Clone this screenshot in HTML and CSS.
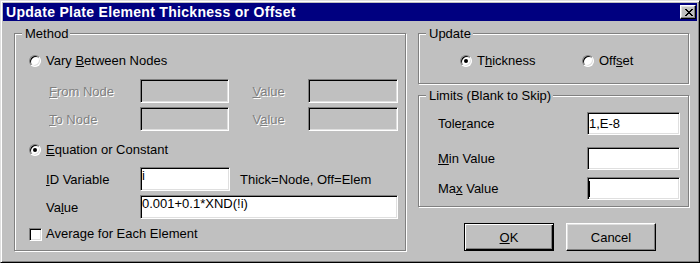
FILE: index.html
```html
<!DOCTYPE html>
<html lang="en">
<head>
    <meta charset="UTF-8">
    <title>Update Plate Element Thickness or Offset</title>
    <link rel="stylesheet" href="styles.css">
</head>
<body>
    <div class="window">
        <div class="titlebar">
            <span class="title">Update Plate Element Thickness or Offset</span>
            <div class="close">
                <svg width="8" height="7" viewBox="0 0 8 7" shape-rendering="crispEdges">
                    <path fill="#000" d="M0 0h2v1H0z M6 0h2v1H6z M1 1h2v1H1z M5 1h2v1H5z M2 2h4v1H2z M3 3h2v1H3z M2 4h4v1H2z M1 5h2v1H1z M5 5h2v1H5z M0 6h2v1H0z M6 6h2v1H6z"/>
                </svg>
            </div>
        </div>

        <div class="main">
            <div class="group method">
                <span class="legend">Method</span>
                <div class="method-body">
                    <div class="opt">
                        <span class="radio"></span>
                        <span>Vary <u>B</u>etween Nodes</span>
                    </div>
                    <div class="row row-from">
                        <span class="lbl dis"><u>F</u>rom Node</span>
                        <div class="field off"></div>
                        <span class="lbl2 dis"><u>V</u>alue</span>
                        <div class="field off"></div>
                    </div>
                    <div class="row row-to">
                        <span class="lbl dis"><u>T</u>o Node</span>
                        <div class="field off"></div>
                        <span class="lbl2 dis">V<u>a</u>lue</span>
                        <div class="field off"></div>
                    </div>
                    <div class="opt opt-eq">
                        <span class="radio on"></span>
                        <span><u>E</u>quation or Constant</span>
                    </div>
                    <div class="row row-id">
                        <span class="lbl"><u>I</u>D Variable</span>
                        <div class="field">i</div>
                        <span class="note">Thick=Node, Off=Elem</span>
                    </div>
                    <div class="row row-val">
                        <span class="lbl">Va<u>l</u>ue</span>
                        <div class="field wide">0.001+0.1*XND(!i)</div>
                    </div>
                    <div class="opt opt-check">
                        <span class="check"></span>
                        <span>Avera<u>g</u>e for Each Element</span>
                    </div>
                </div>
            </div>

            <div class="side">
                <div class="group update">
                    <span class="legend">Update</span>
                    <div class="update-body">
                        <div class="opt first">
                            <span class="radio on"></span>
                            <span>T<u>h</u>ickness</span>
                        </div>
                        <div class="opt">
                            <span class="radio"></span>
                            <span>Off<u>s</u>et</span>
                        </div>
                    </div>
                </div>

                <div class="group limits">
                    <span class="legend">Limits (Blank to Skip)</span>
                    <div class="limits-body">
                        <div class="lrow">
                            <span class="llbl">Tole<u>r</u>ance</span>
                            <div class="lfield">1,E-8</div>
                        </div>
                        <div class="lrow lrow-min">
                            <span class="llbl"><u>M</u>in Value</span>
                            <div class="lfield"></div>
                        </div>
                        <div class="lrow lrow-max">
                            <span class="llbl">Ma<u>x</u> Value</span>
                            <div class="lfield"><span class="caret"></span></div>
                        </div>
                    </div>
                </div>

                <div class="buttons">
                    <div class="btn def"><span><u>O</u>K</span></div>
                    <div class="btn">Cancel</div>
                </div>
            </div>
        </div>
    </div>
</body>
</html>
```

FILE: styles.css
```css
body {
    margin: 0;
    font-family: "Liberation Sans", Arial, sans-serif;
    font-size: 13px;
    color: #000;
    background-color: #c0c0c0;
}

.window {
    width: 700px;
    height: 263px;
    box-sizing: border-box;
    border: 1px solid;
    border-color: #dfdfdf #000 #000 #dfdfdf;
    box-shadow: inset 1px 1px #fff, inset -1px -1px #808080;
    padding: 2px;
    background-color: #c0c0c0;
}

.titlebar {
    height: 18px;
    background-color: #000080;
    display: flex;
    align-items: center;
    padding: 0 1px 0 3px;
}

.title {
    flex: 1;
    color: #fff;
    font-weight: bold;
    font-size: 14px;
    letter-spacing: 0.3px;
    line-height: 18px;
    white-space: nowrap;
}

.close {
    width: 16px;
    height: 14px;
    box-sizing: border-box;
    border: 1px solid;
    border-color: #fff #000 #000 #fff;
    box-shadow: inset -1px -1px #808080, inset 1px 1px #dfdfdf;
    background-color: #c0c0c0;
    display: flex;
    align-items: center;
    justify-content: center;
}

.close svg {
    display: block;
    margin: 1px 0 0 1px;
}

.main {
    display: flex;
    padding: 12px 0 0 11px;
}

/* etched group box */
.group {
    box-sizing: border-box;
    border: 1px solid #808080;
    box-shadow: inset 1px 1px #fff, 1px 1px #fff;
}

.legend {
    display: block;
    width: fit-content;
    margin: -8px 0 -8px 7px;
    padding: 0 2px 0 3px;
    line-height: 16px;
    background-color: #c0c0c0;
}

.method {
    width: 392px;
    height: 218px;
}

.method-body {
    padding: 19px 7px 0 14px;
}

.opt {
    display: flex;
    align-items: center;
    height: 16px;
    gap: 5px;
    line-height: 16px;
}

.opt-eq {
    margin-top: 11px;
}

.opt-check {
    margin-top: 7px;
    gap: 4px;
}

.radio {
    width: 12px;
    height: 12px;
    box-sizing: border-box;
    border-radius: 50%;
    border: 1px solid;
    border-color: #808080 #fff #fff #808080;
    box-shadow: inset 1px 1px #000, inset -1px -1px #dfdfdf;
    background-color: #fff;
    display: flex;
    align-items: center;
    justify-content: center;
}

.radio.on::after {
    content: "";
    width: 4px;
    height: 4px;
    border-radius: 50%;
    background-color: #000;
}

.check {
    width: 13px;
    height: 13px;
    box-sizing: border-box;
    border: 1px solid;
    border-color: #808080 #fff #fff #808080;
    box-shadow: inset 1px 1px #000, inset -1px -1px #dfdfdf;
    background-color: #fff;
}

.row {
    display: flex;
    align-items: center;
    height: 24px;
    margin-left: 17px;
}

.row-from {
    margin-top: 10px;
}

.row-to {
    margin-top: 4px;
}

.row-id {
    margin-top: 9px;
}

.row-val {
    margin-top: 4px;
}

.lbl {
    width: 94px;
    box-sizing: border-box;
}

.lbl2 {
    width: 56px;
    margin-left: 23px;
}

.dis {
    color: #808080;
    text-shadow: 1px 1px #fff;
}

.lbl.dis {
    padding-left: 3px;
}

.field {
    width: 90px;
    height: 24px;
    box-sizing: border-box;
    border: 1px solid;
    border-color: #808080 #fff #fff #808080;
    box-shadow: inset 1px 1px #000, inset -1px -1px #dfdfdf;
    background-color: #fff;
    padding: 1px 1px 0;
    line-height: 14px;
    white-space: nowrap;
}

.field.off {
    background-color: #c0c0c0;
}

.field.wide {
    width: 258px;
}

.note {
    margin-left: 10px;
}

.side {
    margin-left: 12px;
    display: flex;
    flex-direction: column;
}

.update {
    width: 271px;
    height: 51px;
}

.update-body {
    display: flex;
    padding: 19px 0 0 41px;
}

.update-body .first {
    width: 122px;
}

.limits {
    width: 271px;
    height: 112px;
    margin-top: 11px;
}

.limits-body {
    padding: 16px 8px 0 19px;
}

.lrow {
    display: flex;
    align-items: center;
    height: 23px;
}

.lrow-min {
    margin-top: 12px;
}

.lrow-max {
    margin-top: 7px;
}

.llbl {
    flex: 1;
}

.lfield {
    width: 93px;
    height: 23px;
    box-sizing: border-box;
    border: 1px solid;
    border-color: #808080 #fff #fff #808080;
    box-shadow: inset 1px 1px #000, inset -1px -1px #dfdfdf;
    background-color: #fff;
    padding: 0 1px;
    display: flex;
    align-items: center;
}

.caret {
    width: 1px;
    height: 16px;
    background-color: #000;
}

.buttons {
    display: flex;
    gap: 12px;
    margin-top: 16px;
    padding-left: 46px;
}

.btn {
    width: 90px;
    height: 28px;
    box-sizing: border-box;
    border: 1px solid;
    border-color: #fff #000 #000 #fff;
    box-shadow: inset -1px -1px #808080, inset 1px 1px #dfdfdf;
    display: flex;
    align-items: center;
    justify-content: center;
}

.btn.def {
    border-color: #000;
    box-shadow: inset 1px 1px #fff, inset -1px -1px #000, inset -2px -2px #808080;
}
```
